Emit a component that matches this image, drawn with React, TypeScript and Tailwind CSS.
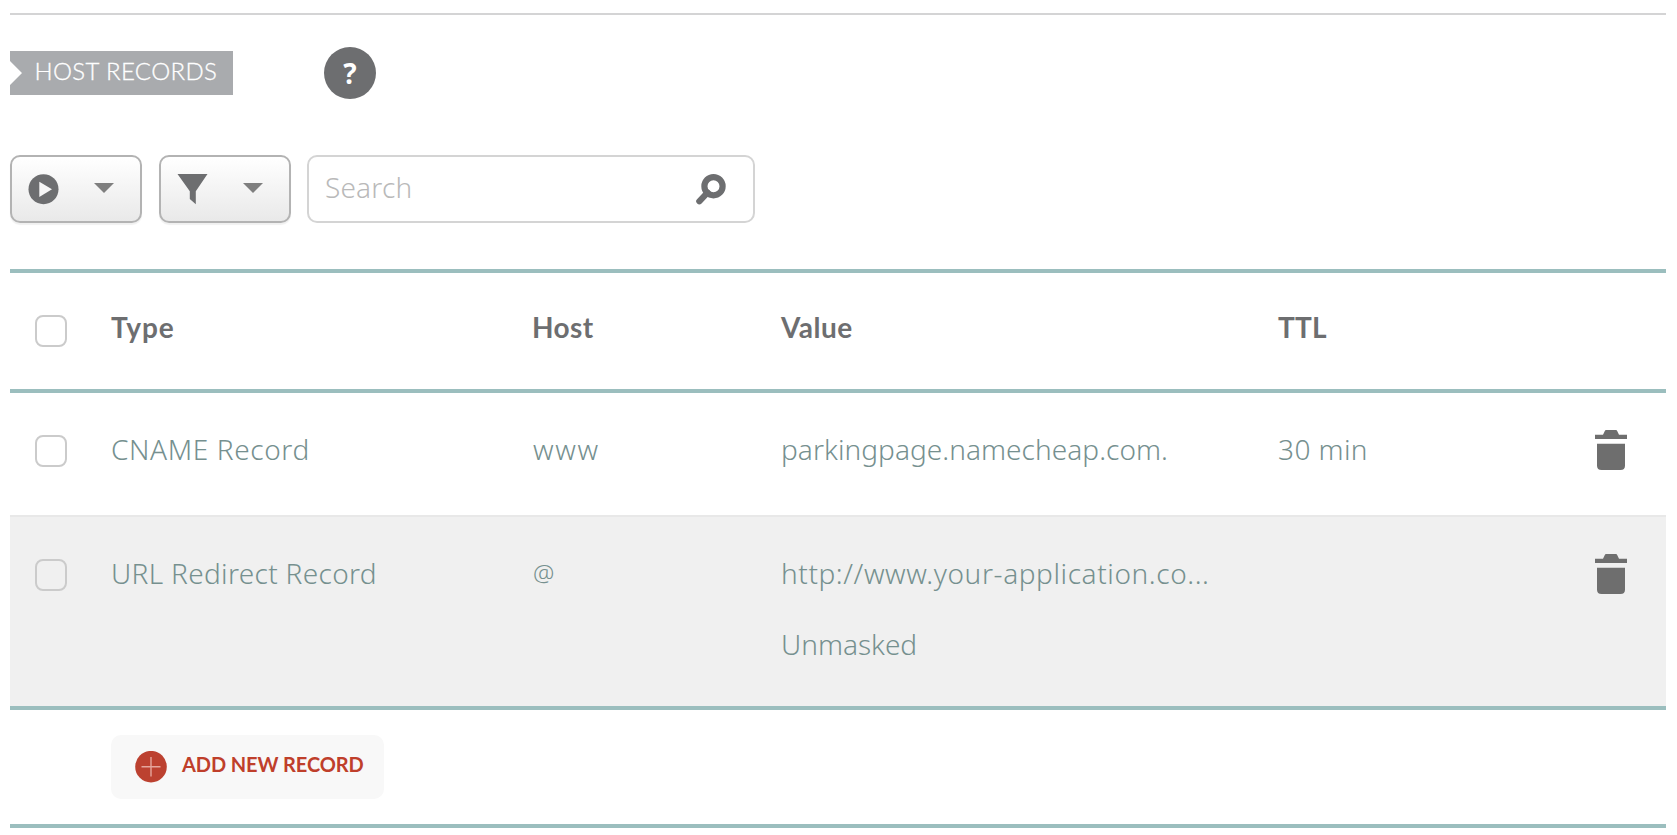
import type { ReactNode } from 'react';

const columns = 'grid grid-cols-[101px_421px_249px_497px_317px_1fr] items-start';

function Caret() {
  return (
    <svg width="20" height="10" viewBox="0 0 20 10" fill="#7f7f7f">
      <path d="M0 0h20L10 10z" />
    </svg>
  );
}

function ToolButton({ children }: { children: ReactNode }) {
  return (
    <button className="flex h-[68px] w-[132px] justify-between rounded-[10px] border-2 border-[#b3b3b3] bg-linear-to-b from-white to-[#e9e9e9] pt-[17px] pr-[26.5px] pl-4 shadow-[0_2px_1px_rgba(0,0,0,0.06)]">
      {children}
      <span className="pt-[9px]">
        <Caret />
      </span>
    </button>
  );
}

function Checkbox({ className }: { className: string }) {
  return (
    <span
      role="checkbox"
      aria-checked="false"
      className={`ml-[25px] block size-8 rounded-lg border-2 border-[#cbcbcb] ${className}`}
    />
  );
}

function Trash() {
  return (
    <svg className="block" width="32" height="40" viewBox="0 0 32 40" fill="#6e6e6e">
      <path d="M0 4.7h8L9.8 1Q10.2 0 11 0h10q.8 0 1.2 1L24 4.7h8V9H0z" />
      <path d="M2 13.7h28V35.5Q30 40 25.5 40h-19Q2 40 2 35.5z" />
    </svg>
  );
}

export default function App() {
  return (
    <div className="h-[835px] w-full overflow-hidden bg-white pt-[13px] pr-[11px] pl-[10px] font-['Noto_Sans',sans-serif] text-[28px] leading-[38px] font-light text-[#76908f]">
      <div className="h-[2px] bg-[#d4d4d5]" />

      <div className="flex pt-8">
        <svg className="mt-1 h-11 w-3 shrink-0" viewBox="0 0 12 44" fill="#a9abae">
          <path d="M0 0h12v44H0V34L12 22 0 10z" />
        </svg>
        <h2 className="mt-1 h-11 w-[211px] bg-[#a9abae] pl-[12.5px] font-['Lato',sans-serif] text-2xl leading-[40px] tracking-[0.37px] whitespace-nowrap text-white [-webkit-text-stroke:0.3px_white]">
          HOST RECORDS
        </h2>
        <div className="ml-[91px] flex size-[52px] items-center justify-center rounded-full bg-[#6d6e70] text-[28px] leading-none font-bold text-white">
          ?
        </div>
      </div>

      <div className="flex pt-14">
        <ToolButton>
          <svg width="31" height="31" viewBox="0 0 31 31">
            <circle cx="15.5" cy="15.200" r="15" fill="#6d6e70" />
            <path d="M11.3 7.700v15.2L24 15.3z" fill="#f6f6f6" />
          </svg>
        </ToolButton>
        <div className="w-[17px]" />
        <ToolButton>
          <svg width="31" height="31" viewBox="0 0 31 31" fill="#6d6e70">
            <path d="M.5 0h30L18.800 17.3V30.300l-6-5.200v-7.800z" />
          </svg>
        </ToolButton>
        <div className="ml-4 flex h-[68px] w-[448px] justify-between rounded-[10px] border-2 border-[#d4d4d4] pt-[11px] pr-[27px] pl-[16px]">
          <span className="tracking-[0.18px] text-[#b9b9b9]">Search</span>
          <svg className="mt-[6px]" width="30" height="31" viewBox="0 0 30 31" fill="none" stroke="#6d6e70">
            <circle cx="17.500" cy="12.200" r="9.100" strokeWidth="6.200" />
            <path d="M11.500 18.600L3.300 27.300" strokeWidth="6.200" strokeLinecap="round" />
          </svg>
        </div>
      </div>

      <div className="mt-[46px] border-y-4 border-[#9bbebe]">
        <div className={`${columns} h-[116px] pt-[35px] font-['Lato',sans-serif] font-bold text-[#6d6e70]`}>
          <Checkbox className="mt-[7px]" />
          <span className="tracking-[0.9px]">Type</span>
          <span className="tracking-[0.4px]">Host</span>
          <span className="tracking-[0.5px]">Value</span>
          <span className="tracking-[0.2px]">TTL</span>
        </div>
      </div>

      <div className={`${columns} h-[122px] pt-[37px]`}>
        <Checkbox className="mt-[5px]" />
        <span className="tracking-[0.62px]">CNAME Record</span>
        <span className="pl-px tracking-[1.7px]">www</span>
        <span className="tracking-[0.06px]">parkingpage.namecheap.com.</span>
        <span className="tracking-[0.4px]">30 min</span>
        <Trash />
      </div>

      <div className={`${columns} h-[195px] border-t-2 border-b-4 border-t-[#e8e8e8] border-b-[#9bbebe] bg-[#f0f0f0] pt-[37px]`}>
        <Checkbox className="mt-[5px]" />
        <span className="tracking-[0.33px]">URL Redirect Record</span>
        <span className="pl-px text-[24px]">@</span>
        <span className="flex flex-col gap-[33px]">
          <span className="tracking-[0.59px]">http://www.your-application.co...</span>
          <span>Unmasked</span>
        </span>
        <span />
        <Trash />
      </div>

      <div className="h-[118px] border-b-4 border-[#9bbebe] pt-[25px] pl-[101px]">
        <button className="flex h-16 w-[273px] rounded-[10px] bg-[#f8f8f8] pt-4 pl-6">
          <svg className="shrink-0" width="32" height="32" viewBox="0 0 32 32">
            <circle cx="16" cy="15.700" r="15.800" fill="#bc4130" />
            <path d="M16 6v19.500M6.500 15.700h19" stroke="#e5a69c" strokeWidth="1.400" />
          </svg>
          <span className="pl-[15px] font-['Lato',sans-serif] text-xl leading-[27px] font-bold tracking-[-0.1px] whitespace-nowrap text-[#bf3f2b]">
            ADD NEW RECORD
          </span>
        </button>
      </div>
    </div>
  );
}
